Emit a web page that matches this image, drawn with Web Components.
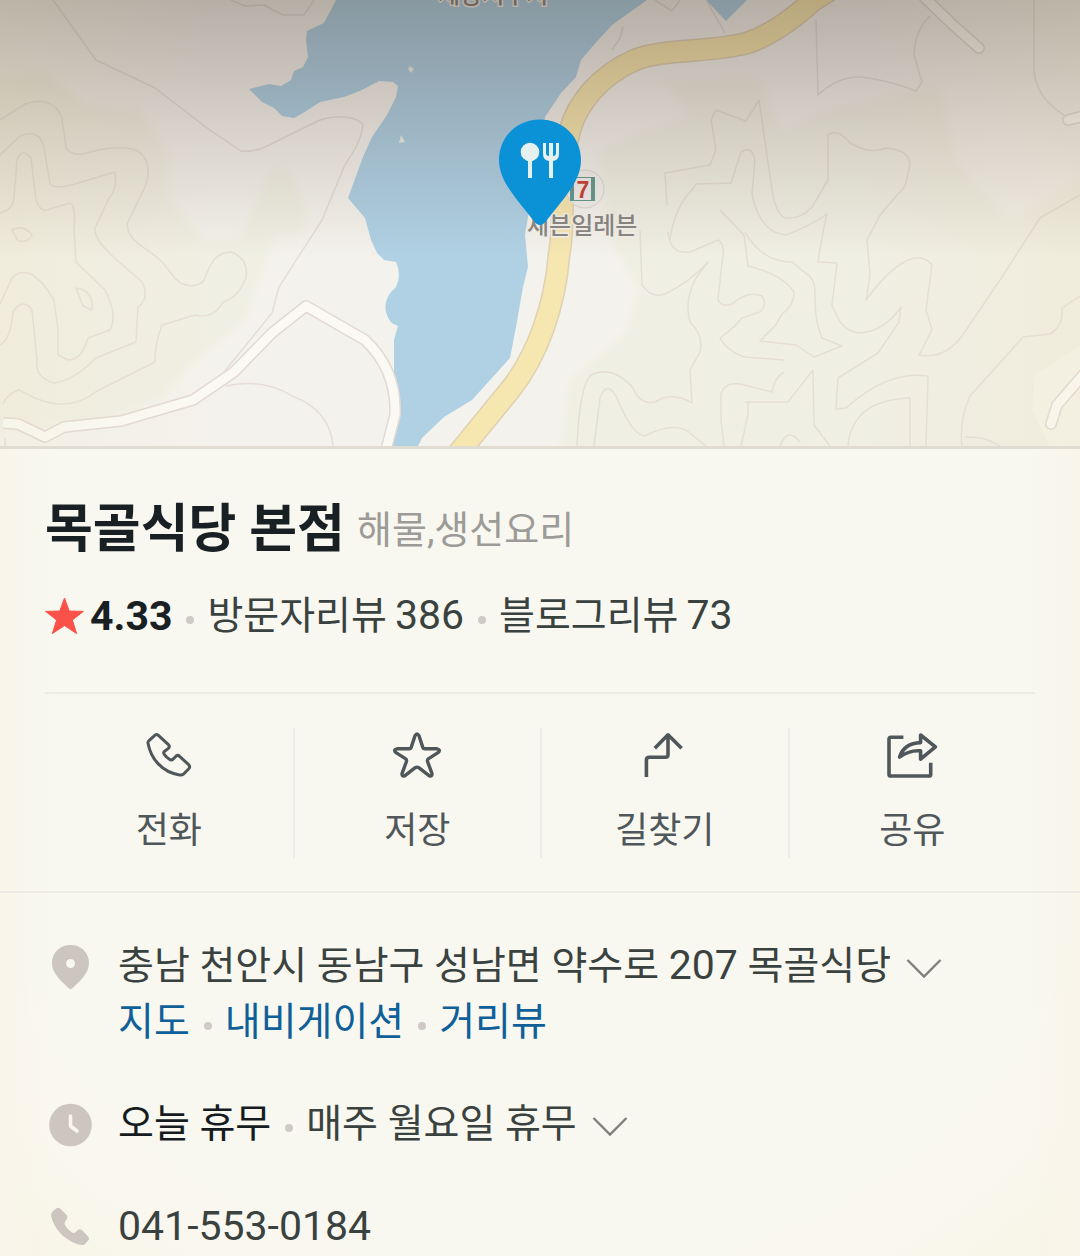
<!DOCTYPE html>
<html lang="ko">
<head>
<meta charset="utf-8">
<meta name="viewport" content="width=device-width, initial-scale=1">
<title>목골식당 본점</title>
<style>
  body {
    margin: 0;
    min-height: 100vh;
    background: #f8f8f0;
    color: #3a4240;
    font-family: Roboto, "Noto Sans CJK KR", sans-serif;
  }
</style>
</head>
<body>
<place-page>
  <place-map slot="map"></place-map>
  <place-header name="목골식당 본점" category="해물,생선요리" score="4.33">
    <review-count label="방문자리뷰" count="386"></review-count>
    <review-count label="블로그리뷰" count="73"></review-count>
  </place-header>
  <action-bar>
    <action-item icon="call">전화</action-item>
    <action-item icon="star">저장</action-item>
    <action-item icon="route">길찾기</action-item>
    <action-item icon="share">공유</action-item>
  </action-bar>
  <info-list>
    <info-row icon="pin">
      <place-address></place-address>
    </info-row>
    <info-row icon="clock">
      <place-hours></place-hours>
    </info-row>
    <info-row icon="phone">
      <place-phone number="041-553-0184"></place-phone>
    </info-row>
  </info-list>
</place-page>

<script>
const define = (name, html, setup) => {
  const template = document.createElement('template');
  template.innerHTML = html;
  customElements.define(name, class extends HTMLElement {
    constructor() {
      super();
      this.attachShadow({ mode: 'open' }).append(template.content.cloneNode(true));
    }
    connectedCallback() {
      if (setup && !this.ready) {
        this.ready = true;
        setup(this, this.shadowRoot);
      }
    }
  });
};

const icons = {
  call: ['0 0 52 52', '<path d="M11.5 7.6Q13.3 5.4 15.4 7.4L25.4 16.6Q27.2 18.6 25.4 20.4L21.6 23.2Q19.8 24.6 21.4 26.6Q23.6 29.6 26.4 31.2Q28.2 32.4 29.8 31.4L33 28.2Q34.8 26.6 36.6 28.4L45.6 36.6Q47.6 38.8 45.8 40.8L40.4 46.2Q39 47.4 36.4 46.9C19 44 8 31 5 15.2Q4.7 13.6 6 12.6Z" fill="none" stroke="currentColor" stroke-width="3" stroke-linejoin="round"/>'],
  star: ['0 0 52 52', '<path d="M24 7.8Q26 4 28 7.8L31.8 19.4Q32.3 20.8 33.8 20.8H46Q50.2 21.8 47 24.6L37.6 30.6Q36 31.8 36.6 33.6L41 45.6Q41.2 49 38 47.6L27.8 39.7Q26 38.6 24.2 39.7L14 47.6Q10.8 49 11 45.6L15.4 33.6Q16 31.8 14.4 30.6L5 24.6Q1.8 21.8 6 20.8H18.2Q19.7 20.8 20.2 19.4Z" fill="none" stroke="currentColor" stroke-width="3.4" stroke-linejoin="round"/>'],
  route: ['0 0 52 52', '<path d="M7.4 49V32Q7.4 29.2 10.2 29.2H26.2Q29 29.2 29 26.4V7M15.8 20.2L29 6.8L42.6 20.2" fill="none" stroke="currentColor" stroke-width="3.6" stroke-linejoin="round"/>'],
  share: ['0 0 52 52', '<path d="M17.4 9.3H4.8Q3 9.3 3 11V46.4Q3 48 4.8 48H43Q44.7 48 44.7 46.4V34.8M34.6 7L49.4 18.8L34.6 31.2V22.8C26 22 20 24.5 13.6 29C16.5 20 24 15 34.6 14.6Z" fill="none" stroke="currentColor" stroke-width="3.6" stroke-linejoin="round"/>'],
  rating: ['0 0 40 38', '<path d="M19.5 1L24.2 14L38.4 14.4L27.4 23L31.6 36.6L19.5 28.6L7.4 36.6L11.6 23L.6 14.4L14.8 14Z" fill="#fc5149" stroke="#fc5149" stroke-linejoin="round"/>'],
  pin: ['0 0 50 56', '<path fill-rule="evenodd" d="M25.5 7C15 7 7 14.5 7 25C7 32 11 37 16 43L24 50.6Q25.5 51.8 27 50.6L35 43C40 37 44 32 44 25C44 14.5 36 7 25.5 7ZM25.5 21A4.5 4.5 0 1 1 25.5 30A4.5 4.5 0 1 1 25.5 21Z" fill="#cdc5bf"/>'],
  clock: ['0 0 50 56', '<circle cx="25.5" cy="29" r="21.3" fill="#cdc5bf"/><path d="M25.5 20V30L32 35" fill="none" stroke="#f8f6ee" stroke-width="3.6" stroke-linecap="round" stroke-linejoin="round"/>'],
  phone: ['0 0 50 56', '<path d="M7.5 13.5L11.5 10.2Q13.5 9 15.4 10.7L21.8 17.3Q23.5 19.4 21.8 21.3L20.3 23.2Q18.8 25 20 27.2Q22.8 31.8 27 34.6Q28.8 35.7 30.5 34.3L32.8 32.1Q34.7 30.5 36.8 32.1L43.2 38.5Q44.8 40.5 43.2 42.5L39.7 46.2Q38 47.6 35 46.7C20.5 43.5 8.5 30.5 6.2 17.8Q5.7 15.2 7.5 13.5Z" fill="#cdc5bf"/>'],
  chevron: ['0 0 36 22', '<path d="M1.5 2L18 18.5L34.5 2" fill="none" stroke="#7d7f7b" stroke-width="2.3"/>']
};

define('ui-icon', `
  <style>
    :host { display: block; flex: none; }
    svg { display: block; }
  </style>
  <svg aria-hidden="true"></svg>`, (host, root) => {
  const [box, shape] = icons[host.getAttribute('name')];
  const [, , width, height] = box.split(' ');
  const svg = root.querySelector('svg');
  svg.setAttribute('viewBox', box);
  svg.setAttribute('width', width);
  svg.setAttribute('height', height);
  svg.innerHTML = shape;
});

const iconNamed = (name) => {
  const icon = document.createElement('ui-icon');
  icon.setAttribute('name', name);
  return icon;
};

define('dot-mark', `
  <style>
    :host { display: block; flex: none; width: 8px; height: 8px; margin: 8px 13px 0 14px; border-radius: 50%; background: #d0c9c6; }
  </style>`);

define('place-page', `
  <style>
    :host { display: flex; flex-direction: column; min-height: 100vh; }
    main {
      flex: 1;
      background:
        linear-gradient(90deg, #f9f5ea, #f9f5ea00 52px calc(100% - 52px), #f9f5ea),
        radial-gradient(ellipse 70% 90% at 50% 30%, #f8f8f0 76%, #faf7ef 88%, #f8f6e8);
    }
  </style>
  <slot name="map"></slot>
  <main><slot></slot></main>`);

define('place-map', `
  <style>
    :host { display: block; border-bottom: 3px solid #e0dcd2; background: #f4f2ec; overflow: hidden; }
    svg { display: block; width: 100%; height: auto; }
    text { font-family: "Noto Sans CJK KR", sans-serif; font-size: 24px; font-weight: 500; fill: #8b8783; stroke: #f4f2ec; stroke-width: 3px; paint-order: stroke; }
    .brand { font-family: "Liberation Sans", sans-serif; font-size: 23px; font-weight: 700; fill: #c94639; stroke: none; }
    .line { fill: none; stroke: #e5ded7; stroke-width: 1.5; stroke-linejoin: round; }
  </style>
  <svg viewBox="0 0 1080 446" role="img" aria-label="지도">
    <defs>
      <linearGradient id="shade" x2="0" y2="1">
        <stop offset="0" stop-color="#2d190a" stop-opacity=".31"/>
        <stop offset=".5" stop-color="#32190c" stop-opacity=".15"/>
        <stop offset="1" stop-color="#32190c" stop-opacity="0"/>
      </linearGradient>
      <linearGradient id="edge">
        <stop offset="0" stop-color="#ead9a8" stop-opacity=".12"/>
        <stop offset=".2" stop-color="#ead9a8" stop-opacity="0"/>
        <stop offset=".8" stop-color="#ead9a8" stop-opacity="0"/>
        <stop offset="1" stop-color="#ead9a8" stop-opacity=".12"/>
      </linearGradient>
      <filter id="soft"><feGaussianBlur stdDeviation="5"/></filter>
    </defs>
    <g fill="#f0efe3" filter="url(#soft)">
      <path d="M-20 80L45 72L85 105L140 110L165 150L170 200L205 240L275 235L245 320L190 365L160 400L95 425L-20 430Z"/>
      <path d="M272 168L290 172L308 215L300 235L240 240Z"/>
      <path d="M660 80L760 78L780 130L830 110L940 85L955 160L1010 220L1100 170V460H560L570 380L625 335L640 290L610 240L600 150L690 115Z"/>
    </g>
    <path fill="#f4f3e8" d="M1080 345L1035 375L1032 410L1050 446H1080Z"/>
    <g fill="#b0d1e4">
      <path d="M336 0L324 23L307 31L306 40L308 57L303 67L294 71L291 80L281 86L269 84L249 89L262 102L274 108L282 116L294 118L303 113L320 102L344 97L362 90L379 81L393 82L398 86L396 97L387 115L372 137L363 157L348 198L365 218L371 240L377 253L384 260L396 262Q402 275 396 287Q383 298 386 312Q389 324 398 326L394 340V373L401 413L392 446H418L422 438L444 417L472 400L510 358L516 327L523 287L528 267L525 235L545 117L561 93L576 77L581 60L592 47L612 25L647 0Z"/>
      <path d="M706 0L726 21L747 0Z"/>
    </g>
    <g class="line">
      <path d="M53 0L96 60L155 88L207 128L241 151Q255 152 265 147L320 120Q349 112 363 124C361 145 350 155 344 167L322 220L279 287L272 313L220 377"/>
      <path d="M231 0L245 6L264 5L283 15L304 15L314 0"/>
      <path d="M0 120L25 104C42 98 56 102 62 118L66 148Q74 158 90 152Q120 144 138 151Q154 163 145 187L127 224C128 246 155 248 170 272Q184 293 203 282C209 270 212 252 231 252Q249 258 246 278Q238 298 223 302Q213 320 195 315L162 325Q154 347 155 362L97 391Q70 413 35 398L19 390Q8 393 3 404"/>
      <path d="M0 155L20 136Q40 128 44 148L50 184Q56 190 78 183L115 172Q118 188 108 200L95 228C93 244 125 266 142 282Q150 298 138 307L136 342L96 358Q73 381 54 383Q34 377 37 360L32 310Q23 297 13 312Q11 339 0 345"/>
      <path d="M0 213Q13 210 14 198L17 160Q22 147 31 158L36 200Q41 214 50 209L70 203Q76 205 74 230L76 262L105 290Q118 315 110 330L88 338Q82 360 68 360L58 355L58 330L54 300Q30 260 12 278L0 304"/>
      <path d="M76 288Q94 290 92 310L83 306ZM12 230Q24 224 32 235Q29 243 18 241Z"/>
      <path d="M226 386Q265 378 292 396Q330 410 333 446M5 446V438"/>
      <path d="M706 0L725 33M655 0L672 11L680 0M623 27L620 38L612 50"/>
      <path d="M816 20L818 95Q838 76 861 77Q888 80 916 91L922 82L914 55Q915 30 930 16M1034 0V70Q1036 98 1064 115"/>
      <path d="M711 120L716 110L746 121L759 100L772 190Q776 214 785 218Q800 220 812 207L828 180V135Q838 128 850 143Q871 155 886 148Q910 150 910 165L905 186L880 215L867 240L870 275L866 300C888 270 916 245 932 265L926 310L932 330L919 355Q944 360 962 336L1000 280L1040 218L1080 195"/>
      <path d="M670 240Q675 206 692 190L696 184L731 183L741 152Q752 145 755 160L752 194Q760 233 786 235Q812 225 827 214Q822 235 818 262L837 263L832 305Q841 332 860 333Q885 331 901 307L899 322L878 353L838 378L836 409L846 408Q888 370 928 376L926 446"/>
      <path d="M667 205L665 173L710 165L716 150L711 120"/>
      <path d="M640 230L642 285Q652 299 665 294Q690 282 708 262L696 278Q684 300 690 322Q704 335 700 352L690 370L692 403Q672 391 655 402Q640 405 633 388Q614 366 593 374Q580 380 577 446M594 446L600 398Q607 379 617 398Q632 435 645 436Q670 423 686 430L706 446"/>
      <path d="M668 232Q670 255 690 252L718 240Q726 244 722 262L718 300Q722 308 732 304Q748 290 762 296Q768 304 760 312L742 318Q734 328 720 338Q726 350 744 357L784 360"/>
      <path d="M720 210L744 235L748 266Q782 274 794 292Q794 306 782 314L775 326L760 341L796 345L814 357L842 346L822 338Q814 320 815 290Q815 278 804 272L792 262Q762 262 745 232"/>
      <path d="M784 372Q774 378 772 392L740 384Q724 382 721 394V420L724 446M745 402L788 402L813 370L814 425L830 446M741 446L748 415V402M848 446Q852 400 910 398V446M780 446Q788 426 800 442"/>
      <path d="M1080 296L1062 308Q1064 326 1050 334L1023 337L970 396Q959 420 962 446M965 437Q985 436 1000 446"/>
    </g>
    <g fill="none" stroke-linejoin="round">
      <g stroke="#e2d9d2" stroke-width="12">
        <path d="M3 423L18 424L45 437L64 427L121 421L193 400L234 372L272 333L306 306L365 340Q397 370 395 415L386 450"/>
        <path d="M924 -3L953 25L979 48M1084 116L1068 120M1084 374L1057 405L1051 424" stroke-linecap="round"/>
      </g>
      <g stroke="#faf9f3" stroke-width="9">
        <path d="M3 423L18 424L45 437L64 427L121 421L193 400L234 372L272 333L306 306L365 340Q397 370 395 415L386 450"/>
        <path d="M924 -3L953 25L979 48M1084 116L1068 120M1084 374L1057 405L1051 424" stroke-linecap="round"/>
      </g>
      <path d="M830 -10L814 0Q776 34 747 43C710 53 665 48 635 60C598 76 577 105 570 130C558 175 566 220 559 255C555 305 538 355 510 390L456 456" stroke="#dfd1b4" stroke-width="23"/>
      <path d="M830 -10L814 0Q776 34 747 43C710 53 665 48 635 60C598 76 577 105 570 130C558 175 566 220 559 255C555 305 538 355 510 390L456 456" stroke="#f6e6b0" stroke-width="20"/>
    </g>
    <g fill="#eff0e8"><path d="M410 66L414 69L411 73L408 69ZM401 135L405 142L399 143Z"/></g>
    <text x="438" y="3">제당저수지</text>
    <circle cx="585" cy="189" r="19" fill="#f1efeb" stroke="#ddd6ce"/>
    <rect x="570" y="177" width="25" height="24" fill="#679b91"/>
    <rect x="574" y="178" width="17" height="22" fill="#f1eeea"/>
    <text class="brand" x="583" y="198" text-anchor="middle">7</text>
    <text x="527" y="234">세븐일레븐</text>
    <rect width="1080" height="258" fill="url(#shade)"/>
    <rect width="1080" height="446" fill="url(#edge)"/>
    <path d="M540 119.5C517 119.5 499 137 499 160C499 180 514 196 533 220Q540 230 547 220C566 196 581 180 581 160C581 137 563 119.5 540 119.5Z" fill="#0b91d5"/>
    <g fill="#e5f1ee">
      <circle cx="530" cy="152" r="9.3"/>
      <rect x="528" y="158" width="4" height="20"/>
      <path d="M543 143H546V153Q546 156 549 156V143H553V156Q556 156 556 153V143H559V154Q559 160 553 161V178H549V161Q543 160 543 154Z"/>
    </g>
  </svg>`);

define('place-header', `
  <style>
    :host { display: block; margin: 0 45px; padding: 49px 0 48px; border-bottom: 2px solid #eeebe5; }
    .title { display: flex; align-items: center; flex-wrap: wrap; column-gap: 12px; margin-bottom: 26px; line-height: 64px; }
    h1 { margin: 0; font-size: 52px; font-weight: 700; color: #182024; }
    .category { font-size: 38px; color: #9c9b97; }
    .meta { display: flex; align-items: center; flex-wrap: wrap; line-height: 56px; }
    .score { display: flex; align-items: center; gap: 5px; font-size: 41px; font-weight: 700; color: #182024; }
  </style>
  <div class="title"><h1></h1><span class="category"></span></div>
  <div class="meta">
    <span class="score"><ui-icon name="rating"></ui-icon><span class="value"></span></span>
    <slot></slot>
  </div>`, (host, root) => {
  root.querySelector('h1').textContent = host.getAttribute('name');
  root.querySelector('.category').textContent = host.getAttribute('category');
  root.querySelector('.value').textContent = host.getAttribute('score');
});

define('review-count', `
  <style>
    :host { display: flex; align-items: center; }
    a { display: flex; align-items: baseline; gap: 8px; font-size: 39px; color: #3a4240; text-decoration: none; white-space: nowrap; }
    .count { font-size: 41px; line-height: 1; }
  </style>
  <dot-mark></dot-mark><a href="#review"><span class="label"></span><span class="count"></span></a>`, (host, root) => {
  root.querySelector('.label').textContent = host.getAttribute('label');
  root.querySelector('.count').textContent = host.getAttribute('count');
});

define('action-bar', `
  <style>
    :host { display: block; padding: 34px 45px 33px; border-bottom: 2px solid #eeebe5; }
    nav { display: grid; grid-template-columns: repeat(4, 1fr); }
    ::slotted(:not(:first-child)) { border-left: 2px solid #efebe6; }
  </style>
  <nav aria-label="바로가기"><slot></slot></nav>`);

define('action-item', `
  <style>
    :host { display: block; }
    button {
      display: flex; flex-direction: column; align-items: center; gap: 26px;
      width: 100%; margin: 0; padding: 0 0 2px; border: 0; background: none;
      font: inherit; font-size: 36px; line-height: 50px; color: #50575a; cursor: pointer;
    }
  </style>
  <button type="button"><span><slot></slot></span></button>`, (host, root) => {
  root.querySelector('button').prepend(iconNamed(host.getAttribute('icon')));
});

define('info-list', `
  <style>
    :host { display: flex; flex-direction: column; gap: 46px; padding: 45px 45px 0; }
  </style>
  <slot></slot>`);

define('info-row', `
  <style>
    :host { display: flex; align-items: flex-start; gap: 23px; font-size: 39px; line-height: 56px; }
    .body { flex: 1; min-width: 0; }
  </style>
  <div class="body"><slot></slot></div>`, (host, root) => {
  root.querySelector('.body').before(iconNamed(host.getAttribute('icon')));
});

define('toggle-button', `
  <style>
    :host { display: block; flex: none; }
    button { display: block; margin: 0; padding: 6px 0 0; border: 0; background: none; cursor: pointer; }
  </style>
  <button type="button" aria-expanded="false"><ui-icon name="chevron"></ui-icon></button>`, (host, root) => {
  root.querySelector('button').setAttribute('aria-label', host.getAttribute('label'));
});

define('place-address', `
  <style>
    :host { display: block; }
    .line { display: flex; align-items: center; gap: 15px; }
    .number { font-size: 41px; line-height: 1; }
    nav { display: flex; align-items: center; flex-wrap: wrap; }
    a { color: #0f6099; text-decoration: none; }
  </style>
  <div class="line">
    <span>충남 천안시 동남구 성남면 약수로 <span class="number">207</span> 목골식당</span>
    <toggle-button label="주소 더보기"></toggle-button>
  </div>
  <nav aria-label="위치"><a href="#map">지도</a><dot-mark></dot-mark><a href="#navigation">내비게이션</a><dot-mark></dot-mark><a href="#street">거리뷰</a></nav>`);

define('place-hours', `
  <style>
    :host { display: flex; align-items: center; }
    .today { color: #151b1e; }
    toggle-button { margin-left: 15px; }
  </style>
  <span class="today">오늘 휴무</span><dot-mark></dot-mark><span>매주 월요일 휴무</span>
  <toggle-button label="영업시간 더보기"></toggle-button>`);

define('place-phone', `
  <style>
    :host { display: block; font-size: 41px; }
    a { color: inherit; text-decoration: none; }
  </style>
  <a></a>`, (host, root) => {
  const link = root.querySelector('a');
  link.href = 'tel:' + host.getAttribute('number');
  link.textContent = host.getAttribute('number');
});
</script>
</body>
</html>
